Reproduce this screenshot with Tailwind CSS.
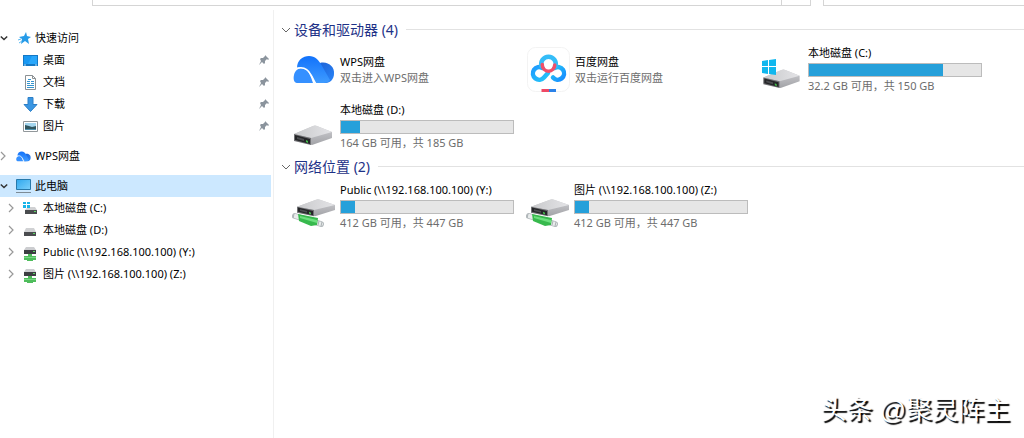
<!DOCTYPE html>
<html lang="zh-CN">
<head>
<meta charset="utf-8">
<meta name="viewport" content="width=device-width, initial-scale=1">
<title>此电脑</title>
<script src="https://cdn.jsdelivr.net/npm/@tailwindcss/browser@4"></script>
</head>
<body class="relative flex min-h-screen flex-col bg-white font-['Noto_Sans','Noto_Sans_CJK_SC',sans-serif] text-[11px] leading-4 text-black">

<svg class="absolute size-0" aria-hidden="true">
  <defs>
    <linearGradient id="cloudA" x1="0" y1="0" x2="0" y2="1"><stop offset="0" stop-color="#1172fb"/><stop offset="1" stop-color="#3f9bff"/></linearGradient>
    <linearGradient id="cloudB" x1="0" y1="0" x2="1" y2="1"><stop offset="0" stop-color="#1c5fd2"/><stop offset="1" stop-color="#2a86fa"/></linearGradient>
    <linearGradient id="driveTop" x1="0" y1="0" x2="1" y2="0"><stop offset="0" stop-color="#c8c9cb"/><stop offset="1" stop-color="#e4e4e7"/></linearGradient>
    <linearGradient id="driveSide" x1="0" y1="0" x2="0" y2="1"><stop offset="0" stop-color="#cfcfd3"/><stop offset="1" stop-color="#a2a3a7"/></linearGradient>
    <linearGradient id="screen" x1="0" y1="0" x2="1" y2="1"><stop offset="0" stop-color="#2fa8ee"/><stop offset="1" stop-color="#7cd0fb"/></linearGradient>
    <linearGradient id="ringL" x1="0" y1="0" x2="1" y2="1"><stop offset="0" stop-color="#1e9bff"/><stop offset="1" stop-color="#25c6f7"/></linearGradient>
    <linearGradient id="ringR" x1="0" y1="0" x2="1" y2="1"><stop offset="0" stop-color="#25c6f7"/><stop offset="1" stop-color="#168bff"/></linearGradient>
    <symbol id="cloud" viewBox="0 0 42 30">
      <path d="M27 8c8-2 15 4 14 11 0 5-4 9-8 9H22z" fill="url(#cloudB)"/>
      <path d="M4 13C4 5 10 1 16 1c6 0 10 4 13 10l8 14c-2 3-5 3-9 3h-6C19 19 14 11 4 13z" fill="url(#cloudA)"/>
      <path d="M1 20c1-5 6-8 11-6 4 2 6 8 8 14H4c-3 0-4-4-3-8z" fill="#3590ff"/>
      <path d="M2 14c8-3 13 0 16 6 2 3 3 6 5 9" fill="none" stroke="#fff" stroke-width="1.5"/>
    </symbol>
    <symbol id="drive" viewBox="0 0 40 22">
      <path d="M1 10 20 2q2-1 4 0l15 6v6L19 21 1 16z" fill="url(#driveSide)"/>
      <path d="M1 10 20 2q2-1 4 0l15 6-21 6z" fill="url(#driveTop)"/>
      <path d="m1 10 17 4v7L1 17z" fill="#707174"/>
      <path d="m2 11 15 4v5L2 16z" fill="#252628"/>
      <path d="m4 13 7 2v2l-7-2z" fill="#4b4d50"/>
      <path d="m13 16 2 1v2l-2-1z" fill="#45bd4b"/>
    </symbol>
    <symbol id="windrive" viewBox="0 0 40 30">
      <svg x="1" y="9" width="39" height="21"><use href="#drive"/></svg>
      <path d="m1 2 6-1v6H1zm7-1 7-1v7H8zM1 8h6v7l-6-1zm7 0h7v8l-7-1z" fill="#10b7ee"/>
    </symbol>
    <symbol id="netdrive" viewBox="0 0 44 30">
      <path d="m3 18 26 8" stroke="#b4babd" stroke-width="6" stroke-linecap="round"/>
      <path d="m3 18 26 8" stroke="#e9ecec" stroke-width="4" stroke-linecap="round"/>
      <path d="m6 16 20 4-1 7-6 1-12-5z" fill="#37b94d"/>
      <path d="m8 18 17 4v3L8 20z" fill="#6ce07e"/>
      <path d="m2 16-1 4m26 3-1 4m4-3-1 4" stroke="#aab0b3"/>
      <svg x="4" y="0" width="40" height="19" viewBox="0 0 40 22" preserveAspectRatio="none"><use href="#drive"/></svg>
    </symbol>
    <symbol id="minidrive" viewBox="0 0 14 9">
      <path d="M3 0h8l2 4H1z" fill="#d0d1d3"/><path d="M1 4h12v4H1z" fill="#4a4c4f"/><path d="M10 5h2v1h-2z" fill="#5bd864"/>
    </symbol>
    <symbol id="mininet" viewBox="0 0 14 14">
      <path d="M3 0h8l2 3H1z" fill="#cccdd0"/><path d="M1 3h12v4H1z" fill="#3c3e42"/><path d="M10 4h2v1h-2z" fill="#5bd864"/>
      <path d="M5 7h4v2h4v4h-3v1H4v-1H1V9h4z" fill="#4fbd5c"/><path d="M1 10h12v1H1z" fill="#7ad886"/>
    </symbol>
    <symbol id="miniwin" viewBox="0 0 14 14">
      <path d="M5 6h7l2 3H2z" fill="#d0d1d3"/><path d="M2 9h12v4H2z" fill="#4a4c4f"/><path d="M11 10h2v1h-2z" fill="#5bd864"/>
      <path d="M0 1h3v2H0zm4 0h3v2H4zM0 4h3v3H0zm4 0h3v3H4z" fill="#18b4e8"/>
    </symbol>
    <symbol id="pin" viewBox="0 0 10 10">
      <path d="m6 0 4 4-1 1-1-1-2 2v2L5 9 3 7 0 10l2-4L1 4l1-1h2l2-2z" fill="#8b949d"/>
    </symbol>
    <symbol id="down" viewBox="0 0 10 6"><path d="m1 1 4 4 4-4" fill="none" stroke="currentColor" stroke-width="var(--w,1)"/></symbol>
    <symbol id="right" viewBox="0 0 6 10"><path d="m1 1 4 4-4 4" fill="none" stroke="currentColor" stroke-width="1.2"/></symbol>
  </defs>
</svg>

<header class="flex h-[6px] gap-3 pl-[92px]">
  <div class="flex flex-1 justify-end border-x border-b border-[#d5d5d5]"><div class="mr-7 border-l border-[#d5d5d5]"></div></div>
  <div class="w-[201px] border-b border-l border-[#d5d5d5]"></div>
</header>

<div class="flex flex-1">
  <nav class="mt-1 w-[274px] shrink-0 border-r border-[#f0f0f0] pt-[17px] pr-[2px]">
    <ul>
      <li><a href="#" class="flex h-[22px] items-center"><svg class="h-[6px] w-2 text-[#333] [--w:1.8]"><use href="#down"/></svg>
        <svg class="mr-1 ml-[10px] h-[13px] w-[13px]" viewBox="0 0 13 13"><path d="m8 0 1 4 4 1-3 2 1 5-4-3-4 3 1-5-3-2 5-1z" fill="#269be8"/><path d="m0 8 3-1M1 11l3-2" stroke="#5bbaf3"/></svg>快速访问</a></li>
      <li><a href="#" class="flex h-[22px] items-center pl-[23px]"><svg class="mr-[5px] h-[11px] w-[15px]" viewBox="0 0 15 11"><path d="M0 0h15v11H0z" fill="#1478c5"/><path d="M1 1h13v8H1z" fill="#1898f3"/><path d="M9 1h5v8H5z" fill="#29a7fb"/><path d="M1 10h2m9 0h2" stroke="#b9e2fa"/></svg>桌面<svg class="mr-[2px] ml-auto size-[10px]"><use href="#pin"/></svg></a></li>
      <li><a href="#" class="flex h-[22px] items-center pl-[23px]"><svg class="mr-[5px] h-[15px] w-[15px]" viewBox="0 0 15 15"><path d="M2.500.5h7l3 3v11h-10z" fill="#fff" stroke="#8b9194"/><path d="M9.500.5v3h3" fill="none" stroke="#8b9194"/><path d="M4 6.500h3m1 0h3m-7 2h3m1 0h3m-7 2h7m-7 2h7M5 4.500h3" stroke="#3595cf"/></svg>文档<svg class="mr-[2px] ml-auto size-[10px]"><use href="#pin"/></svg></a></li>
      <li><a href="#" class="flex h-[22px] items-center pl-[23px]"><svg class="mr-[5px] h-[15px] w-[15px]" viewBox="0 0 15 15"><path d="M5 .5h5v7h4L7.500 14.500 1 7.500h4z" fill="#3a96e2" stroke="#2c7fc7"/></svg>下载<svg class="mr-[2px] ml-auto size-[10px]"><use href="#pin"/></svg></a></li>
      <li><a href="#" class="flex h-[22px] items-center pl-[23px]"><svg class="mr-[5px] h-[11px] w-[15px]" viewBox="0 0 15 11"><path d="M.5.5h14v10H.5z" fill="#fff" stroke="#92989b"/><path d="M2 2h11v7H2z" fill="#a4d6ef"/><path d="m2 4 4 1 3 1 4-1v4H2z" fill="#31565f"/><path d="M2 8h11v1H2z" fill="#4c8fac"/></svg>图片<svg class="mr-[2px] ml-auto size-[10px]"><use href="#pin"/></svg></a></li>
    </ul>
    <a href="#" class="my-2 flex h-[22px] items-center"><svg class="h-[10px] w-[6px] text-[#999]"><use href="#right"/></svg><svg class="mr-1 ml-[10px] h-[11px] w-[15px]"><use href="#cloud"/></svg>WPS网盘</a>
    <ul>
      <li><a href="#" aria-current="page" class="flex h-[22px] items-center bg-[#cce8ff]"><svg class="h-[6px] w-2 text-[#333] [--w:1.8]"><use href="#down"/></svg><svg class="mr-1 ml-2 h-[14px] w-[15px]" viewBox="0 0 15 14"><path d="M.5.5h14v10H.5z" fill="url(#screen)" stroke="#2779aa"/><path d="M0 13.500h15" stroke="#7c8b96"/></svg>此电脑</a></li>
      <li><a href="#" class="flex h-[22px] items-center pl-2"><svg class="h-[10px] w-[6px] text-[#999]"><use href="#right"/></svg><svg class="mr-[6px] ml-[9px] size-[14px]"><use href="#miniwin"/></svg>本地磁盘 (C:)</a></li>
      <li><a href="#" class="flex h-[22px] items-center pl-2"><svg class="h-[10px] w-[6px] text-[#999]"><use href="#right"/></svg><svg class="mt-1 mr-[6px] ml-[9px] h-[9px] w-[14px]"><use href="#minidrive"/></svg>本地磁盘 (D:)</a></li>
      <li><a href="#" class="flex h-[22px] items-center pl-2"><svg class="h-[10px] w-[6px] text-[#999]"><use href="#right"/></svg><svg class="mt-1 mr-[6px] ml-[9px] size-[14px]"><use href="#mininet"/></svg>Public (\\192.168.100.100) (Y:)</a></li>
      <li><a href="#" class="flex h-[22px] items-center pl-2"><svg class="h-[10px] w-[6px] text-[#999]"><use href="#right"/></svg><svg class="mt-1 mr-[6px] ml-[9px] size-[14px]"><use href="#mininet"/></svg>图片 (\\192.168.100.100) (Z:)</a></li>
    </ul>
  </nav>

  <main class="min-w-0 flex-1 pt-[13px] pl-[7px]">
    <section>
      <h2 class="mb-[5px] flex h-[21px] items-center text-sm text-[#1e3287]"><svg class="mr-[3px] h-[6px] w-[10px] text-[#666]"><use href="#down"/></svg>设备和驱动器 (4)<span class="ml-2 h-px flex-1 bg-[#e2e2e2]"></span></h2>
      <ul class="grid grid-cols-[repeat(auto-fill,234px)] gap-y-2 pl-3">
        <li class="flex h-[49px] items-center"><svg class="mr-[5px] h-[30px] w-[42px]"><use href="#cloud"/></svg><div><p>WPS网盘</p><p class="text-[#6d6d6d]">双击进入WPS网盘</p></div></li>
        <li class="flex h-[49px] items-center">
          <svg class="mr-[5px] h-[46px] w-[43px]" viewBox="0 0 43 46"><rect x=".5" y=".5" width="42" height="44" rx="8" fill="#fff" stroke="#f3f3f3"/>
            <g fill="none" stroke-width="4.500" stroke-linecap="round"><path d="M21 26l-4 4.500a6.300 6.300 0 1 1-1.500-9.500" stroke="url(#ringL)"/><path d="M27.500 21a6.300 6.300 0 1 1-1.500 9.500" stroke="url(#ringR)"/><path d="M14.500 19a7.300 7.300 0 1 1 14 0" stroke="#35bdf8"/><circle cx="21.500" cy="18" r="6.200" stroke="#f0506a" stroke-width="3.500" stroke-dasharray="19.500 40"/></g>
            <path d="M14.500 42H22v3h-7.500z" fill="#ef4965"/><path d="M22 42h7v3h-7z" fill="#2b82e8"/></svg>
          <div><p>百度网盘</p><p class="text-[#6d6d6d]">双击运行百度网盘</p></div></li>
        <li class="flex h-[49px]"><svg class="mt-[14px] mr-[7px] h-[30px] w-10"><use href="#windrive"/></svg><div><p>本地磁盘 (C:)</p><div class="mt-[2px] mb-px h-[14px] w-[174px] border border-[#bcbcbc] bg-[#e6e6e6]"><div class="h-full bg-[#26a0da]" style="width:78%"></div></div><p class="text-[#6d6d6d]">32.2 GB 可用，共 150 GB</p></div></li>
        <li class="flex h-[49px]"><svg class="mt-[22px] mr-[7px] h-[22px] w-10"><use href="#drive"/></svg><div><p>本地磁盘 (D:)</p><div class="mt-[2px] mb-px h-[14px] w-[174px] border border-[#bcbcbc] bg-[#e6e6e6]"><div class="h-full bg-[#26a0da]" style="width:11%"></div></div><p class="text-[#6d6d6d]">164 GB 可用，共 185 GB</p></div></li>
      </ul>
    </section>
    <section class="mt-[5px]">
      <h2 class="mb-[5px] flex h-[21px] items-center text-sm text-[#1e3287]"><svg class="mr-[3px] h-[6px] w-[10px] text-[#666]"><use href="#down"/></svg>网络位置 (2)<span class="ml-2 h-px flex-1 bg-[#e2e2e2]"></span></h2>
      <ul class="grid grid-cols-[repeat(auto-fill,234px)] gap-y-2 pl-3">
        <li class="flex h-[49px]"><svg class="mt-4 mr-[4px] -ml-px h-[30px] w-11"><use href="#netdrive"/></svg><div><p>Public (\\192.168.100.100) (Y:)</p><div class="mt-[2px] mb-px h-[14px] w-[174px] border border-[#bcbcbc] bg-[#e6e6e6]"><div class="h-full bg-[#26a0da]" style="width:8%"></div></div><p class="text-[#6d6d6d]">412 GB 可用，共 447 GB</p></div></li>
        <li class="flex h-[49px]"><svg class="mt-4 mr-[4px] -ml-px h-[30px] w-11"><use href="#netdrive"/></svg><div><p>图片 (\\192.168.100.100) (Z:)</p><div class="mt-[2px] mb-px h-[14px] w-[174px] border border-[#bcbcbc] bg-[#e6e6e6]"><div class="h-full bg-[#26a0da]" style="width:8%"></div></div><p class="text-[#6d6d6d]">412 GB 可用，共 447 GB</p></div></li>
      </ul>
    </section>
  </main>
</div>

<p class="absolute right-[14px] bottom-[10px] font-['Liberation_Sans','Noto_Sans_CJK_SC',sans-serif] text-[26px] leading-9 text-white [text-shadow:2px_2px_1px_#000]">头条 @聚灵阵主</p>
</body>
</html>
